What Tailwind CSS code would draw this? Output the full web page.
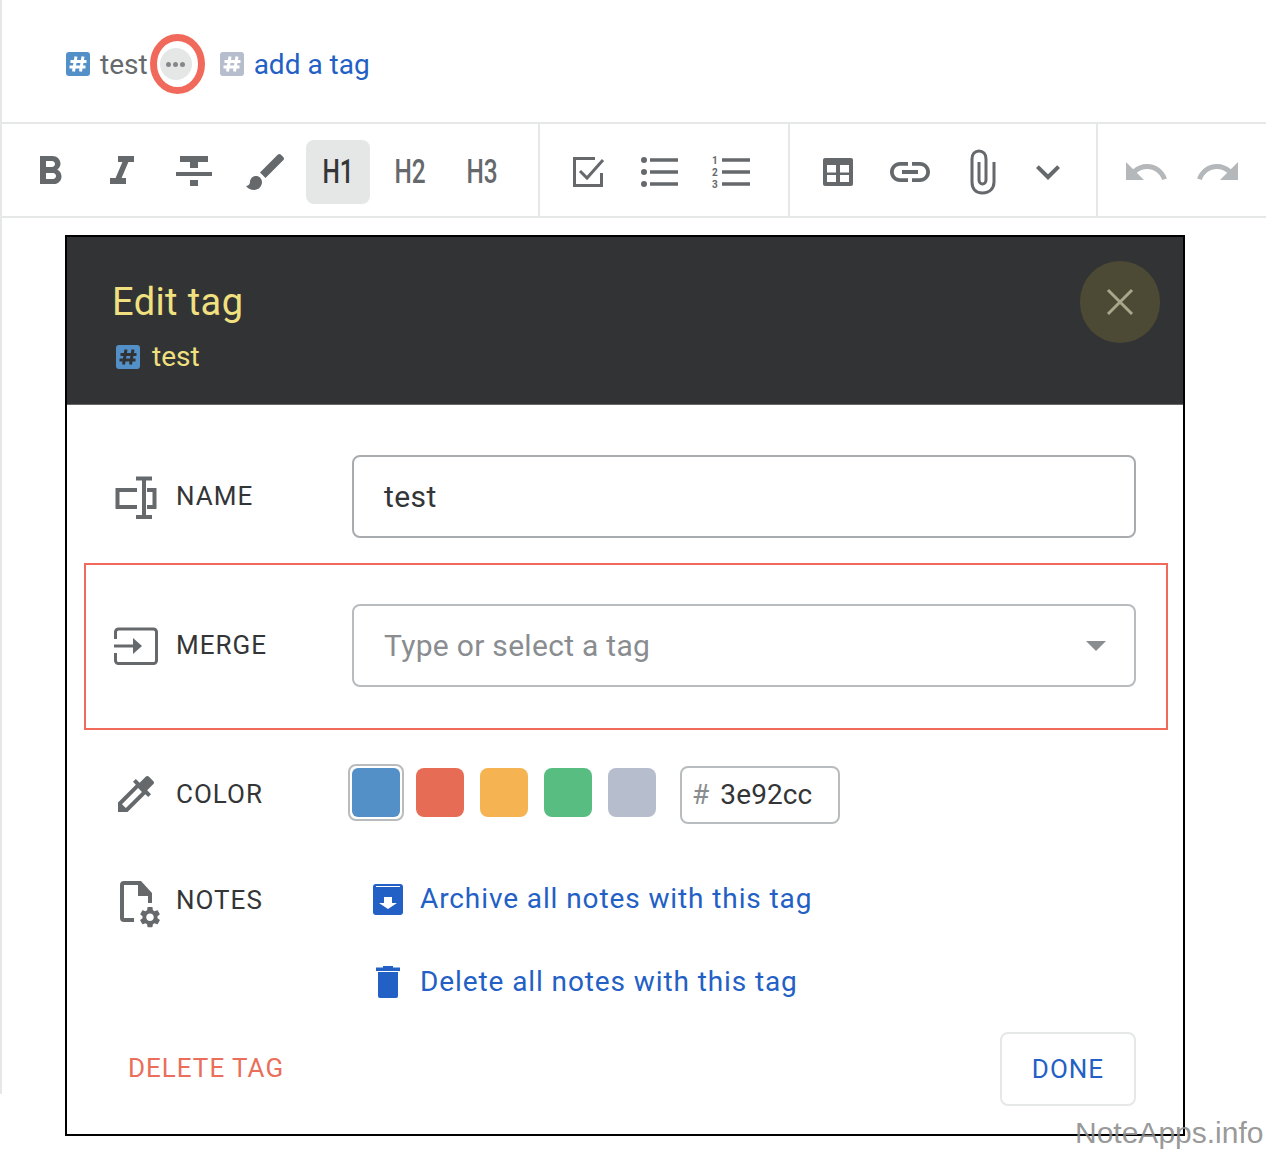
<!DOCTYPE html>
<html lang="en">
  <head>
    <meta charset="UTF-8">
    <title>Edit tag</title>
    <script src="https://cdn.jsdelivr.net/npm/@tailwindcss/browser@4"></script>
  </head>

  <body class="bg-white font-['Roboto',sans-serif]">
    <div class="relative w-[1266px] h-[1152px] overflow-hidden">

      <!-- editor behind the dialog -->
      <div class="h-[1094px] border-l-2 border-[#e6e8e8]">
        <div class="h-[122px] pt-[6px] flex items-center text-[28px] pl-[64px]">
          <svg class="w-6 h-6" viewBox="0 0 24 24"><rect width="24" height="24" rx="3" fill="#5390c8"/><path d="M10 4.500 7.500 19.500M17 4.500l-2.500 15M4.500 9.500h16M3.500 15h16" stroke="#fff" stroke-width="3" fill="none"/></svg>
          <span class="ml-[10px] text-[#66696c] translate-y-[1px]">test</span>
          <span class="ml-[12px] w-8 h-8 rounded-full bg-[#e5e7e7] flex items-center justify-center gap-[2px]">
            <i class="w-[5px] h-[5px] rounded-full bg-[#85888b]"></i><i class="w-[5px] h-[5px] rounded-full bg-[#85888b]"></i><i class="w-[5px] h-[5px] rounded-full bg-[#85888b]"></i>
          </span>
          <svg class="ml-7 w-6 h-6" viewBox="0 0 24 24"><rect width="24" height="24" rx="3" fill="#b6bdcc"/><path d="M10 4.500 7.500 19.500M17 4.500l-2.500 15M4.500 9.500h16M3.500 15h16" stroke="#fff" stroke-width="3" fill="none"/></svg>
          <span class="ml-[10px] text-[#2360c5] translate-y-[1px]">add a tag</span>
        </div>

        <div class="h-[96px] flex border-y-2 border-[#e6e8e8] text-[#66696c]">
          <div class="w-[538px] shrink-0 flex items-center gap-2 pl-4 pt-1 border-r-2 border-[#e6e8e8]">
            <span class="w-16 h-16 flex items-center justify-center"><svg class="w-12 h-12" viewBox="0 0 24 24" fill="currentColor"><path d="M15.600 10.790c.97-.67 1.650-1.770 1.650-2.790 0-2.260-1.750-4-4-4H7v14h7.040c2.090 0 3.710-1.700 3.710-3.790 0-1.520-.86-2.820-2.150-3.420zM10 6.500h3c.83 0 1.500.67 1.500 1.500s-.67 1.500-1.500 1.500h-3v-3zm3.500 9H10v-3h3.500c.83 0 1.500.67 1.500 1.500s-.67 1.500-1.500 1.500z"/></svg></span>
            <span class="w-16 h-16 flex items-center justify-center"><svg class="w-12 h-12" viewBox="0 0 24 24" fill="currentColor"><path d="M10 4v3h2.210l-3.420 8H6v3h8v-3h-2.210l3.420-8H18V4z"/></svg></span>
            <span class="w-16 h-16 flex items-center justify-center"><svg class="w-12 h-12" viewBox="0 0 24 24" fill="currentColor"><path d="M10 19h4v-3h-4v3zM5 4v3h5v3h4V7h5V4H5zM3 14h18v-2H3v2z"/></svg></span>
            <span class="w-16 h-16 flex items-center justify-center"><svg class="w-12 h-12" viewBox="0 0 24 24" fill="currentColor"><path d="M7 14c-1.660 0-3 1.340-3 3 0 1.310-1.160 2-2 2 .92 1.220 2.490 2 4 2 2.210 0 4-1.790 4-4 0-1.660-1.340-3-3-3zm13.710-9.370l-1.340-1.340c-.39-.39-1.020-.39-1.410 0L9 12.250 11.750 15l8.960-8.960c.39-.39.39-1.030 0-1.410z"/></svg></span>
            <span class="w-16 h-16 flex items-center justify-center rounded-lg bg-[#e5e7e7] text-[#333537] text-[33px] font-medium"><span class="scale-x-[0.74]">H1</span></span>
            <span class="w-16 h-16 flex items-center justify-center text-[33px] font-medium"><span class="scale-x-[0.74]">H2</span></span>
            <span class="w-16 h-16 flex items-center justify-center text-[33px] font-medium"><span class="scale-x-[0.74]">H3</span></span>
          </div>

          <div class="w-[250px] shrink-0 flex items-center gap-2 pl-4 pt-1 border-r-2 border-[#e6e8e8]">
            <span class="w-16 h-16 flex items-center justify-center"><svg class="w-12 h-12" viewBox="0 0 24 24" fill="none" stroke="currentColor" stroke-width="1.500"><path d="M15.500 5.250H5.250v13.500h13.500V12.500"/><path d="M8 11.500l3.500 3.500 8-9"/></svg></span>
            <span class="w-16 h-16 flex items-center justify-center"><svg class="w-12 h-12" viewBox="0 0 24 24" fill="currentColor"><circle cx="4" cy="6" r="1.500"/><circle cx="4" cy="12" r="1.500"/><circle cx="4" cy="18" r="1.500"/><path d="M7 5.100h14v1.800H7zM7 11.100h14v1.800H7zM7 17.100h14v1.800H7z"/></svg></span>
            <span class="w-16 h-16 flex items-center justify-center"><svg class="w-12 h-12" viewBox="0 0 24 24" fill="currentColor"><text x="2" y="7.800" font-size="5" font-weight="700" font-family="Roboto">1</text><text x="2" y="13.800" font-size="5" font-weight="700" font-family="Roboto">2</text><text x="2" y="19.800" font-size="5" font-weight="700" font-family="Roboto">3</text><path d="M7 5.100h14v1.800H7zM7 11.100h14v1.800H7zM7 17.100h14v1.800H7z"/></svg></span>
          </div>

          <div class="w-[308px] shrink-0 flex items-center pl-4 pt-1 border-r-2 border-[#e6e8e8]">
            <span class="w-16 h-16 flex items-center justify-center"><svg class="w-12 h-12" viewBox="0 0 24 24"><rect x="4.500" y="5" width="15" height="14" rx="1" fill="currentColor"/><path d="M6.500 8.500H11v3.800H6.500zM13 8.500h4.500v3.800H13zM6.500 13.500H11V17H6.500zM13 13.500h4.500V17H13z" fill="#fff"/></svg></span>
            <span class="ml-2 w-16 h-16 flex items-center justify-center"><svg class="w-12 h-12" viewBox="0 0 24 24" fill="currentColor"><path d="M3.900 12c0-1.710 1.390-3.100 3.100-3.100h4V7H7c-2.760 0-5 2.240-5 5s2.240 5 5 5h4v-1.900H7c-1.710 0-3.100-1.390-3.100-3.100zM8 13h8v-2H8v2zm9-6h-4v1.900h4c1.710 0 3.100 1.390 3.100 3.100s-1.390 3.100-3.100 3.100h-4V17h4c2.760 0 5-2.240 5-5s-2.240-5-5-5z"/></svg></span>
            <span class="ml-2 w-16 h-16 flex items-center justify-center"><svg class="w-12 h-12" viewBox="0 0 48 48" fill="none" stroke="currentColor" stroke-width="3"><path d="M36 14v20c0 6-4 11-11.500 11S14 40 14 34V11c0-5 3-8 7-8s7 3 7 8v21c0 2-1.500 4-3.500 4s-3.500-2-3.500-4V14"/></svg></span>
            <span class="ml-[10px] w-12 h-16 flex items-center justify-center"><svg class="w-12 h-12 shrink-0" viewBox="0 0 24 24" fill="currentColor"><path d="M7.410 8.590L12 13.170l4.590-4.580L18 10l-6 6-6-6z"/></svg></span>
          </div>

          <div class="flex items-center gap-2 pl-4 pt-1 text-[#b5b8ba]">
            <span class="w-16 h-16 flex items-center justify-center"><svg class="w-12 h-12" viewBox="0 0 24 24" fill="currentColor"><path d="M12.500 8c-2.650 0-5.050.99-6.900 2.600L2 7v9h9l-3.620-3.620c1.390-1.160 3.160-1.880 5.120-1.880 3.540 0 6.550 2.310 7.600 5.500l2.370-.78C21.080 11.030 17.150 8 12.500 8z"/></svg></span>
            <span class="w-16 h-16 flex items-center justify-center"><svg class="w-12 h-12" viewBox="0 0 24 24" fill="currentColor"><path d="M18.400 10.600C16.550 8.990 14.150 8 11.500 8c-4.650 0-8.580 3.030-9.960 7.220L3.900 16c1.050-3.190 4.050-5.500 7.600-5.500 1.950 0 3.730.72 5.120 1.880L13 16h9V7l-3.600 3.600z"/></svg></span>
          </div>
        </div>
      </div>

      <!-- annotation ring around the tag menu -->
      <svg class="absolute left-[148px] top-[31px] w-[60px] h-[66px]" viewBox="0 0 60 66" fill="none"><ellipse cx="29.500" cy="33" rx="24" ry="26.500" stroke="#f0695a" stroke-width="7"/></svg>

      <!-- dialog -->
      <div class="absolute left-[65px] top-[235px] w-[1120px] h-[901px] border-2 border-black bg-white">
        <div class="h-[168px] bg-[#313335] border-b border-[#66686a] relative pl-[45px] text-[#f0e07f]">
          <div class="pt-[42px] text-[38px] leading-[46px] tracking-[0.4px]">Edit tag</div>
          <div class="mt-[14px] flex items-center text-[28px] leading-[36px]">
            <svg class="ml-1 w-6 h-6" viewBox="0 0 24 24"><rect width="24" height="24" rx="3" fill="#5390c8"/><path d="M10 4.500 7.500 19.500M17 4.500l-2.500 15M4.500 9.500h16M3.500 15h16" stroke="#313335" stroke-width="3" fill="none"/></svg>
            <span class="ml-3">test</span>
          </div>
          <div class="absolute left-[1013px] top-[24px] w-20 h-[82px] rounded-full bg-[#4c4a35] flex items-center justify-center">
            <svg class="w-7 h-7" viewBox="0 0 28 28" stroke="#a9a78b" stroke-width="3"><path d="M2 2l24 24M26 2 2 26"/></svg>
          </div>
        </div>

        <div class="pl-[45px] pr-[47px] text-[26px] tracking-[1px] text-[#333537]">
          <div class="mt-[50px] flex items-center h-[83px]">
            <div class="w-[240px] shrink-0 flex items-center gap-4">
              <svg class="w-12 h-12 text-[#66696c]" viewBox="0 0 48 48" fill="none" stroke="currentColor" stroke-width="4"><path d="M25 17H5.500v17H25M35 17h7.500v17H35"/><path d="M24 5.500h16M24 44h16"/><path d="M32 5v40"/></svg>
              <span>NAME</span>
            </div>
            <div class="flex-1 h-full border-2 border-[#a9acaf] rounded-lg flex items-center pl-[30px] text-[30px] tracking-[0.4px]">test</div>
          </div>

          <div class="mt-[66px] flex items-center h-[83px]">
            <div class="w-[240px] shrink-0 flex items-center gap-4">
              <svg class="w-12 h-12 text-[#66696c]" viewBox="0 0 48 48" fill="none" stroke="currentColor" stroke-width="3"><path d="M3.500 17v-7a3 3 0 0 1 3-3h35a3 3 0 0 1 3 3v28.500a3 3 0 0 1-3 3h-35a3 3 0 0 1-3-3V31"/><path d="M2 24h22"/><path d="M21 16l9 8-9 8z" fill="currentColor" stroke="none"/></svg>
              <span>MERGE</span>
            </div>
            <div class="flex-1 h-full border-2 border-[#b9bcbe] rounded-lg flex items-center justify-between pl-[30px] pr-[28px] text-[30px] text-[#8a8d90] tracking-[0.3px]">
              <span>Type or select a tag</span>
              <span class="w-0 h-0 border-x-[10px] border-x-transparent border-t-[10px] border-t-[#8a8d90]"></span>
            </div>
          </div>

          <div class="mt-[77px] flex items-start h-[60px]">
            <div class="w-[240px] shrink-0 flex items-center gap-4 h-[60px]">
              <svg class="w-12 h-12 text-[#66696c]" viewBox="0 0 24 24" fill="currentColor"><path d="M20.710 5.630l-2.340-2.340c-.39-.39-1.020-.39-1.410 0l-3.120 3.120-1.930-1.910-1.410 1.410 1.420 1.420L3 16.250V21h4.750l8.920-8.920 1.420 1.420 1.410-1.410-1.920-1.920 3.120-3.120c.4-.4.4-1.030.01-1.420zM6.920 19L5 17.080l8.060-8.060 1.920 1.920L6.920 19z"/></svg>
              <span>COLOR</span>
            </div>
            <div class="flex items-start -ml-1">
              <div class="w-[56px] h-[57px] border-2 border-[#b9bcbe] rounded-lg p-[2px]"><div class="w-full h-full rounded-md bg-[#5390c8]"></div></div>
              <div class="ml-3 mt-1 w-12 h-[49px] rounded-lg bg-[#e66c56]"></div>
              <div class="ml-4 mt-1 w-12 h-[49px] rounded-lg bg-[#f5b351]"></div>
              <div class="ml-4 mt-1 w-12 h-[49px] rounded-lg bg-[#58bd81]"></div>
              <div class="ml-4 mt-1 w-12 h-[49px] rounded-lg bg-[#b6bdcc]"></div>
              <div class="ml-6 mt-[2px] w-40 h-[58px] border-2 border-[#b9bcbe] rounded-lg flex items-center pl-[10px] text-[28px] tracking-[0.1px]"><span class="text-[#8a8d90]">#</span><span class="ml-[11px]">3e92cc</span></div>
            </div>
          </div>

          <div class="mt-[48px] flex items-center h-[54px]">
            <div class="w-[240px] shrink-0 flex items-center gap-4">
              <svg class="w-12 h-12 text-[#66696c] translate-y-[5px]" viewBox="0 0 48 48" fill="currentColor"><path d="M22 40H12a2 2 0 0 1-2-2V5a2 2 0 0 1 2-2h14" fill="none" stroke="currentColor" stroke-width="4"/><path d="M26 1h3l11 12v3H26z"/><path d="M38 14v9" fill="none" stroke="currentColor" stroke-width="4"/><path transform="translate(25.400 24.600) scale(1.050)" d="M19.140 12.940c.04-.3.06-.61.06-.94 0-.32-.02-.64-.07-.94l2.030-1.580c.18-.14.23-.41.12-.61l-1.920-3.320c-.12-.22-.37-.29-.59-.22l-2.390.96c-.5-.38-1.030-.7-1.620-.94l-.36-2.540c-.04-.24-.24-.41-.48-.41h-3.840c-.24 0-.43.17-.47.41l-.36 2.540c-.59.24-1.130.57-1.620.94l-2.390-.96c-.22-.08-.47 0-.59.22L2.740 8.870c-.12.21-.08.47.12.61l2.030 1.580c-.05.3-.09.63-.09.94s.02.64.07.94l-2.030 1.580c-.18.14-.23.41-.12.61l1.920 3.320c.12.22.37.29.59.22l2.390-.96c.5.38 1.030.7 1.620.94l.36 2.540c.05.24.24.41.48.41h3.840c.24 0 .44-.17.47-.41l.36-2.540c.59-.24 1.130-.56 1.620-.94l2.390.96c.22.08.47 0 .59-.22l1.920-3.320c.12-.22.07-.47-.12-.61l-2.010-1.580zM12 15.600c-1.980 0-3.600-1.620-3.600-3.600s1.620-3.600 3.600-3.600 3.600 1.620 3.600 3.600-1.620 3.600-3.600 3.600z"/></svg>
              <span class="translate-y-[1px]">NOTES</span>
            </div>
            <div class="ml-[21px] flex items-center text-[28px] tracking-[0.9px] text-[#2360c5]">
              <svg class="w-[30px] h-[31px]" viewBox="0 0 30 31"><rect width="30" height="31" rx="3" fill="#2360c5"/><path d="M3 2.500h24" stroke="#fff" stroke-width="1"/><path d="M11 13h8v6h5l-9 6-9-6h5z" fill="#fff"/></svg>
              <span class="ml-[17px]">Archive all notes with this tag</span>
            </div>
          </div>

          <div class="mt-[29px] flex items-center h-[54px] pl-[240px]">
            <div class="ml-[21px] flex items-center text-[28px] tracking-[0.9px] text-[#2360c5]">
              <svg class="ml-[3px] w-6 h-8" viewBox="0 0 24 32" fill="#2360c5"><path d="M7 0h10v1.500h7V5H0V1.500h7z"/><path d="M2 6h20v24a2 2 0 0 1-2 2H4a2 2 0 0 1-2-2z"/></svg>
              <span class="ml-[20px]">Delete all notes with this tag</span>
            </div>
          </div>

          <div class="mt-[23px] flex items-center justify-between pl-[16px]">
            <span class="text-[#e96f5b] -translate-y-[1px]">DELETE TAG</span>
            <span class="w-[136px] h-[74px] border-2 border-[#e6e8e8] rounded-lg flex items-center justify-center text-[#2360c5]">DONE</span>
          </div>
        </div>
      </div>

      <!-- annotation around the merge row -->
      <div class="absolute left-[84px] top-[563px] w-[1084px] h-[167px] border-2 border-[#f0695a]"></div>

      <!-- watermark -->
      <div class="absolute left-[1075px] top-[1115px] font-['Liberation_Sans',sans-serif] text-[30px] leading-[36px] text-[#8c8c8c]/90 whitespace-nowrap">NoteApps.info</div>
    </div>
  </body>
</html>
